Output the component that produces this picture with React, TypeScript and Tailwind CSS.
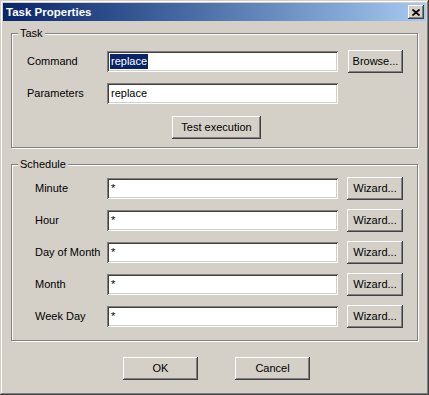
import React from "react";

const raised =
  "bg-[#d4d0c8] shadow-[inset_-1px_-1px_#404040,inset_1px_1px_#fff,inset_-2px_-2px_#808080,inset_2px_2px_#d4d0c8]";
const sunken =
  "bg-white shadow-[inset_1px_1px_#808080,inset_-1px_-1px_#fff,inset_2px_2px_#404040,inset_-2px_-2px_#d4d0c8]";

function Button({ label, w, h = 23, className = "" }: { label: string; w: string; h?: number; className?: string }) {
  return (
    <div
      className={`${raised} ${w} ${h === 23 ? "h-[23px]" : ""} flex items-center justify-center shrink-0 ${className}`}
    >
      {label}
    </div>
  );
}

function Field({ value, selected = false }: { value: string; selected?: boolean }) {
  return (
    <div className={`${sunken} w-[231px] h-[21px] flex items-center pl-[3px] shrink-0`}>
      {selected ? (
        <span className="bg-[#0a246a] text-white leading-[15px] px-[1px]">{value}</span>
      ) : (
        <span className="leading-[15px] px-[1px]">{value}</span>
      )}
    </div>
  );
}

function Group({ title, className, children }: { title: string; className: string; children: React.ReactNode }) {
  return (
    <div
      className={`relative border border-[#808080] shadow-[1px_1px_0_#fff,inset_1px_1px_0_#fff] ${className}`}
    >
      <span className="absolute top-[-7px] left-[6px] px-[2px] bg-[#d4d0c8] leading-[13px]">{title}</span>
      {children}
    </div>
  );
}

const schedule = ["Minute", "Hour", "Day of Month", "Month", "Week Day"];

export default function App() {
  return (
    <div
      className="w-[429px] h-[395px] bg-[#d4d0c8] p-[3px] flex flex-col text-[11px] text-black shadow-[inset_-1px_-1px_#404040,inset_1px_1px_#d4d0c8,inset_-2px_-2px_#808080,inset_2px_2px_#fff] overflow-hidden"
      style={{ fontFamily: '"Liberation Sans", Arial, sans-serif' }}
    >
      {/* title bar */}
      <div className="h-[18px] bg-gradient-to-r from-[#0a246a] to-[#a6caf0] flex items-center justify-between pl-[3px] pr-[2px]">
        <span className="text-white font-bold text-[11.5px] leading-[14px]">Task Properties</span>
        <div className={`${raised} w-[16px] h-[14px] flex items-center justify-center`}>
          <svg width="8" height="7" viewBox="0 0 8 7">
            <path d="M0.5 0.5L7.5 6.5M7.5 0.5L0.5 6.5" stroke="#000" strokeWidth="1.7" />
          </svg>
        </div>
      </div>

      <div className="px-[8px] flex flex-col">
        <Group title="Task" className="mt-[12px] pt-[16px] pb-[8px]">
          <div className="flex items-center h-[23px] pl-[15px]">
            <span className="w-[80px] shrink-0">Command</span>
            <Field value="replace" selected />
            <Button label="Browse..." w="w-[55px]" className="ml-[10px]" />
          </div>
          <div className="flex items-center h-[21px] pl-[15px] mt-[10px]">
            <span className="w-[80px] shrink-0">Parameters</span>
            <Field value="replace" />
          </div>
          <Button label="Test execution" w="w-[89px]" className="ml-[160px] mt-[12px]" />
        </Group>

        <Group title="Schedule" className="mt-[16px] pt-[12px] pb-[12px] flex flex-col gap-[9px]">
          {schedule.map((s) => (
            <div key={s} className="flex items-center h-[23px] pl-[23px]">
              <span className="w-[72px] shrink-0">{s}</span>
              <Field value="*" />
              <Button label="Wizard..." w="w-[56px]" className="ml-[9px]" />
            </div>
          ))}
        </Group>

        <div className="flex mt-[16px] pl-[112px] gap-[37px]">
          <Button label="OK" w="w-[75px]" />
          <Button label="Cancel" w="w-[75px]" />
        </div>
      </div>
    </div>
  );
}
